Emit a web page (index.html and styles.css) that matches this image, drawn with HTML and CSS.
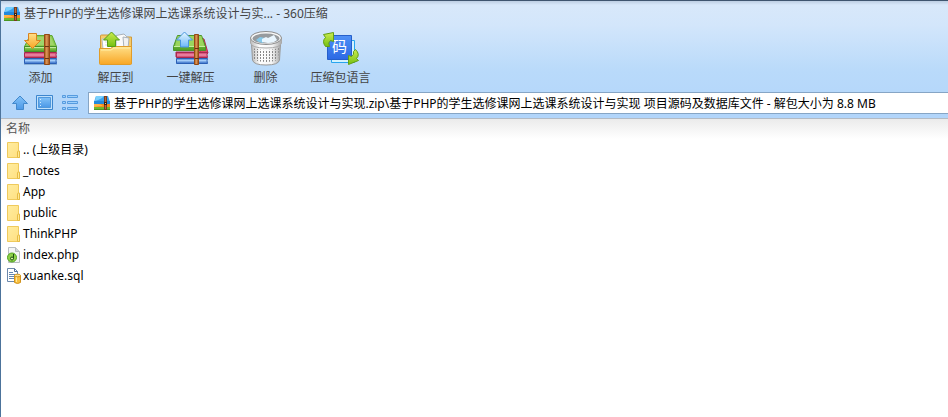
FILE: index.html
```
<!DOCTYPE html>
<html lang="zh-CN">
<head>
<meta charset="utf-8">
<title>360压缩</title>
<link rel="stylesheet" href="styles.css">
</head>
<body>
<svg class="defs" aria-hidden="true">
  <defs>
    <linearGradient id="green" x1="0" y1="0" x2="0" y2="1"><stop offset="0" stop-color="#a2d766"/><stop offset="1" stop-color="#4d9e22"/></linearGradient>
    <linearGradient id="red" x1="0" y1="0" x2="0" y2="1"><stop offset="0" stop-color="#c93660"/><stop offset=".5" stop-color="#f08fac"/><stop offset="1" stop-color="#c02c56"/></linearGradient>
    <linearGradient id="blue" x1="0" y1="0" x2="0" y2="1"><stop offset="0" stop-color="#3a78cf"/><stop offset=".4" stop-color="#a5cdf8"/><stop offset="1" stop-color="#2b65c4"/></linearGradient>
    <linearGradient id="strap"><stop offset="0" stop-color="#a4541c"/><stop offset=".45" stop-color="#e09a58"/><stop offset="1" stop-color="#934714"/></linearGradient>
    <linearGradient id="orange" x1="0" y1="0" x2="0" y2="1"><stop offset="0" stop-color="#ffdf88"/><stop offset="1" stop-color="#f8a624"/></linearGradient>
    <linearGradient id="sky" x1="0" y1="0" x2="0" y2="1"><stop offset="0" stop-color="#e6f6ff"/><stop offset="1" stop-color="#6db8f8"/></linearGradient>
    <linearGradient id="nav" x1="0" y1="0" x2="0" y2="1"><stop offset="0" stop-color="#82c2f8"/><stop offset="1" stop-color="#4b98e7"/></linearGradient>
    <linearGradient id="lime" x1="0" y1="0" x2="0" y2="1"><stop offset="0" stop-color="#cdec4f"/><stop offset="1" stop-color="#74c012"/></linearGradient>
    <linearGradient id="metal"><stop offset="0" stop-color="#bbb"/><stop offset=".3" stop-color="#fff"/><stop offset=".7" stop-color="#f4f4f4"/><stop offset="1" stop-color="#aaa"/></linearGradient>
    <linearGradient id="tile" x1="0" y1="0" x2="0" y2="1"><stop offset="0" stop-color="#4f90f6"/><stop offset="1" stop-color="#2c69e4"/></linearGradient>
    <linearGradient id="paper" x1="0" y1="0" x2="1" y2="1"><stop offset="0" stop-color="#ffedA0"/><stop offset="1" stop-color="#ffdf80"/></linearGradient>
    <pattern id="mesh" width="3" height="3" patternUnits="userSpaceOnUse"><path d="M0 0h1v2H0z" fill="#888"/></pattern>
    <symbol id="archive" viewBox="0 0 16 14">
      <path d="M2 0h12l2 6H0z" fill="#38a1ee"/><path d="M2 0h8q-2 3-9 5z" fill="#7bd0fc"/>
      <path d="M0 5h16v3H0z" fill="#2389dc"/><path d="M0 8h16v3H0z" fill="#f78b1e"/><path d="M0 8h4q3 0 5 2-4 0-9 1z" fill="#ffb545"/>
      <path d="M0 11h16v3H0z" fill="#6fb92e"/><path d="M0 13h16v1H0z" fill="#4b9722"/>
      <path d="M10 0h3v14h-3z" fill="#7a3c1c"/><path d="M11 1h1v12h-1z" fill="#b46b3b"/><path d="M10 6h3v3h-3z" fill="#41200f"/><path d="M11 7h1v1h-1z" fill="#eac28d"/>
    </symbol>
    <symbol id="books" viewBox="0 0 36 36">
      <path d="M1 34h33v1H1z" fill="#47729e" opacity=".4"/>
      <path d="M1.500 28.500h32q-1 2 0 5h-32z" fill="url(#blue)" stroke="#2b5fb5"/>
      <path d="M1.500 22.500h32q-1 2 0 5h-32z" fill="url(#red)" stroke="#a82750"/>
      <path d="M7 5.500h22l4.500 11h-32z" fill="#8dcc50" stroke="#5ea632"/>
      <path d="M8 7h20l3 8H4z" fill="#b3de85" opacity=".5"/>
      <path d="M1.500 16.500h32v5h-32z" fill="url(#green)" stroke="#478f28"/>
      <path d="M2 17.500h31" stroke="#c2e99b"/>
    </symbol>
    <symbol id="folder" viewBox="0 0 14 16">
      <path d="M.5.500h11V9h1v6.500H.5z" fill="url(#paper)" stroke="#efca5c"/><path d="M10.500 15.500V10q0-1 1-1t1 1v5.500z" fill="#ffe894" stroke="#e6bc45"/>
    </symbol>
  </defs>
</svg>
<main class="window">
  <header class="chrome">
    <div class="titlebar">
      <svg class="archive-icon" aria-hidden="true"><use href="#archive"/></svg>
      <h1 class="title">基于PHP的学生选修课网上选课系统设计与实... - 360压缩</h1>
    </div>
    <div class="toolbar">
      <button class="tool" type="button">
        <svg class="tool-icon" viewBox="0 0 36 36" aria-hidden="true"><use href="#books"/><path d="M21.500 4.500h5v30h-5z" fill="url(#strap)" stroke="#944913"/><path d="M22 16.500h4M22 28.500h4" stroke="#6b3413"/><path d="M5.500 3.500h8v7h4L9.500 18.500l-8-8h4z" fill="url(#orange)" stroke="#d9821f"/></svg>
        <span>添加</span>
      </button>
      <button class="tool" type="button">
        <svg class="tool-icon" viewBox="0 0 36 36" aria-hidden="true"><path d="M2.500 33.500V6q0-1 1-1h9l2 2h19v26.500z" fill="#f7cb69" stroke="#cf9a3c"/><path d="M4 9l12-2 2 12H5z" fill="#fff" stroke="#b9bec4"/><path d="M18 5.500l8-1.500 3 3v12H18z" fill="#fafafa" stroke="#aab2ba"/><path d="M25 7l6 1-1 11h-4z" fill="#f1f1f1" stroke="#aab2ba"/><path d="M7 12h6M7 15h6" stroke="#d4dae1"/><path d="M1.500 18.500h11l3-2h18v17q0 1-1 1h-30q-1 0-1-1z" fill="url(#orange)" stroke="#e19c29"/><path d="M3 20h10l3-2h16" fill="none" stroke="#fff0a5"/><path d="M13.500 2L21.500 10h-4v6.500h-8V10h-4z" fill="url(#lime)" stroke="#559c18"/></svg>
        <span>解压到</span>
      </button>
      <button class="tool" type="button">
        <svg class="tool-icon" viewBox="0 0 36 36" aria-hidden="true"><path d="M28 8l3 1 4 14-4 4H3v-5h24z" fill="#dc4668" stroke="#b52a4b"/><path d="M3.500 22.500h31q-1 2 0 5h-31z" fill="url(#red)" stroke="#a82750"/><path d="M3.500 28.500h31q-1 2 0 5h-31z" fill="url(#blue)" stroke="#2b5fb5"/><path d="M4.500 5.500h24l4 11v4H.5v-4z" fill="url(#green)" stroke="#4b9529"/><path d="M5 6h23l3.500 10H2z" fill="#9bd55d"/><path d="M1 16.500h31" stroke="#c7ee9e"/><path d="M21.500 4.500h4v30h-4z" fill="url(#strap)" stroke="#944913"/><path d="M22 18.500h4M22 28.500h4" stroke="#6b3413"/><path d="M11.500 2L19.500 10h-4v7h-8v-7h-4z" fill="url(#sky)" stroke="#4a96de"/></svg>
        <span>一键解压</span>
      </button>
      <button class="tool" type="button">
        <svg class="tool-icon" viewBox="0 0 36 36" aria-hidden="true"><path d="M3.500 14l1 16q1 5 13.500 5t13.500-5l1-16z" fill="url(#metal)" stroke="#999"/><path d="M5 18q13 4 26 0l-1 12q-12 4-24 0z" fill="url(#mesh)"/><path d="M2.500 8v5q1 5 15.500 5t15.500-5V8z" fill="url(#metal)" stroke="#aaa"/><ellipse cx="18" cy="8" rx="15.500" ry="6.500" fill="#f8f8f8" stroke="#8c8c8c"/><ellipse cx="18" cy="8.500" rx="13.500" ry="5" fill="#979b9e"/><path d="M8 10l4-3 5 1-2 5q-4 0-7-3z" fill="#85c9ea"/><path d="M14 9l4-2 2 1 6-3 3 5q-3 3-9 3l-6-1z" fill="#e9f6ff"/></svg>
        <span>删除</span>
      </button>
      <button class="tool" type="button">
        <svg class="tool-icon" viewBox="0 0 36 36" aria-hidden="true"><path d="M8.500 10.500h23v22h-23z" fill="#d2f2ff" stroke="#28a5ef"/><path d="M4.500 5.500h24v24h-24z" fill="url(#tile)" stroke="#265fca"/><text class="glyph" x="16.500" y="22" text-anchor="middle">码</text><path d="M2.500 16.500q-4-5 0-9l-2-3 10-2v9l-3-1q-3 2-1 6z" fill="url(#lime)" stroke="#639f13"/><path d="M32.500 19.500q5 5 1 9l2 2-10 4v-9l3 1q3-2 2-5z" fill="url(#lime)" stroke="#639f13"/></svg>
        <span>压缩包语言</span>
      </button>
    </div>
    <div class="navbar">
      <button class="nav" type="button" aria-label="向上"><svg class="nav-icon" viewBox="0 0 18 16" aria-hidden="true"><path d="M9 1l7.500 7.500h-4v6h-7v-6h-4z" fill="url(#nav)" stroke="#4389cc"/></svg></button>
      <button class="nav" type="button" aria-label="图标视图"><svg class="nav-icon" viewBox="0 0 18 16" aria-hidden="true"><path d="M.5.500h16v14H.5z" fill="#c0e0fb" stroke="#3d86ce"/><path d="M2.500 2.500h12v10h-12z" fill="url(#nav)" stroke="#5098dc"/><path d="M4 4h1v1H4zM4 7h1v1H4zM4 10h1v1H4z" fill="#d3edff"/></svg></button>
      <button class="nav" type="button" aria-label="列表视图"><svg class="nav-icon" viewBox="0 0 18 16" aria-hidden="true"><path d="M1.500.500h3v2h-3zM1.500 6.500h3v2h-3zM1.500 12.500h3v2h-3zM6.500.500h10v2h-10zM6.500 6.500h10v2h-10zM6.500 12.500h10v2h-10z" fill="#9ed0fb" stroke="#569bdf"/></svg></button>
      <div class="address">
        <svg class="archive-icon" aria-hidden="true"><use href="#archive"/></svg>
        <input class="path" type="text" aria-label="路径" value="基于PHP的学生选修课网上选课系统设计与实现.zip\基于PHP的学生选修课网上选课系统设计与实现 项目源码及数据库文件 - 解包大小为 8.8 MB">
      </div>
    </div>
  </header>
  <table class="files">
    <thead><tr><th scope="col">名称</th></tr></thead>
    <tbody>
      <tr><td><div class="file"><svg class="file-icon" aria-hidden="true"><use href="#folder"/></svg><span>.. (上级目录)</span></div></td></tr>
      <tr><td><div class="file"><svg class="file-icon" aria-hidden="true"><use href="#folder"/></svg><span>_notes</span></div></td></tr>
      <tr><td><div class="file"><svg class="file-icon" aria-hidden="true"><use href="#folder"/></svg><span>App</span></div></td></tr>
      <tr><td><div class="file"><svg class="file-icon" aria-hidden="true"><use href="#folder"/></svg><span>public</span></div></td></tr>
      <tr><td><div class="file"><svg class="file-icon" aria-hidden="true"><use href="#folder"/></svg><span>ThinkPHP</span></div></td></tr>
      <tr><td><div class="file"><svg class="file-icon" viewBox="0 0 14 16" aria-hidden="true"><path d="M1.500.500h7l4 4v11h-11z" fill="#f3f5f6" stroke="#b8bdc1"/><path d="M8.500.500v4h4" fill="#d4d8dc" stroke="#b8bdc1"/><circle cx="5" cy="10.500" r="4.500" fill="#8fd04a" stroke="#4fa31d"/><path d="M6.500 7v5" stroke="#1c4f12"/><ellipse cx="5" cy="11.500" rx="1.500" ry="1.500" fill="#d5f49b" stroke="#1c4f12"/></svg><span>index.php</span></div></td></tr>
      <tr><td><div class="file"><svg class="file-icon" viewBox="0 0 14 16" aria-hidden="true"><path d="M.5.500h7l3 3v10H.5z" fill="#fff" stroke="#6b88ac"/><path d="M7.500.500v3h3" fill="none" stroke="#526f98"/><path d="M2 4.500h4M2 6.500h6M2 8.500h5M2 10.500h5" stroke="#6286b0"/><path d="M7.500 7.500v7q3 2 6 0v-7z" fill="#f8c03f" stroke="#d0921f"/><path d="M9.500 8v6" stroke="#ffe7a0"/><ellipse cx="10.500" cy="7.500" rx="3" ry="1.300" fill="#ffe18a" stroke="#d0921f"/></svg><span>xuanke.sql</span></div></td></tr>
    </tbody>
  </table>
</main>
</body>
</html>
```
FILE: styles.css
```
* {
  box-sizing: border-box;
}

body {
  margin: 0;
  background: #fff;
  color: #000;
  font: 12px/16px "Noto Sans", "Noto Sans CJK SC", sans-serif;
}

button,
input {
  padding: 0;
  border: 0;
  background: transparent;
  color: inherit;
  font: inherit;
}

svg {
  display: block;
  flex: none;
}

.defs {
  position: absolute;
  width: 0;
  height: 0;
}

.window {
  min-height: 100vh;
  border-top: 1px solid #3f556f;
  border-left: 1px solid #4c739b;
  overflow: hidden;
}

.chrome {
  border-bottom: 1px solid #b4bbc4;
  background: linear-gradient(#bdcee2 0, #d8e8fa 4px, #d3e6fb 24px, #b9dafa 70px, #b2d5fa 100%);
}

.titlebar {
  display: flex;
  align-items: center;
  gap: 4px;
  height: 26px;
  padding-left: 3px;
}

.archive-icon {
  width: 16px;
  height: 14px;
}

.title {
  margin: 0;
  color: #444;
  font-size: 12px;
  font-weight: 400;
  white-space: nowrap;
}

.toolbar {
  display: flex;
  height: 62px;
  padding-left: 2px;
}

.tool {
  display: flex;
  flex-direction: column;
  align-items: center;
  gap: 4px;
  width: 75px;
  padding-top: 3px;
  color: #444;
}

.tool-icon {
  width: 36px;
  height: 36px;
}

.glyph {
  fill: #fff;
  font-size: 15px;
}

.navbar {
  display: flex;
  align-items: center;
  height: 29px;
  padding: 0 0 1px 6px;
}

.nav {
  display: flex;
  justify-content: center;
  width: 25px;
}

.nav-icon {
  width: 18px;
  height: 16px;
}

.address {
  display: flex;
  flex: 1;
  align-items: center;
  gap: 4px;
  height: 22px;
  margin-left: 6px;
  padding-left: 5px;
  border: 1px solid #86a5c5;
  border-right: 0;
  background: #fff;
}

.path {
  flex: 1;
  min-width: 0;
  height: 20px;
  outline: 0;
}

.files {
  width: 100%;
  border-collapse: collapse;
}

.files th {
  height: 20px;
  padding: 0 5px;
  background: linear-gradient(#ebebeb, #fff);
  color: #555;
  font-weight: 400;
  text-align: left;
}

.files td {
  height: 21px;
  padding: 0 6px;
}

.file {
  display: flex;
  align-items: center;
  gap: 2px;
}

.file-icon {
  width: 14px;
  height: 16px;
}
```
